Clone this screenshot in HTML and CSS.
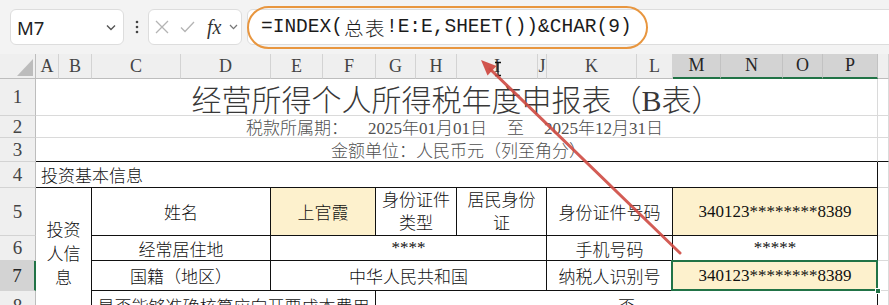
FILE: index.html
```html
<!DOCTYPE html>
<html lang="zh-CN">
<head>
<meta charset="utf-8">
<title>经营所得个人所得税年度申报表</title>
<link rel="stylesheet" href="styles.css">
</head>
<body>
<div class="toolbar">
  <div class="namebox">
    <span class="ref">M7</span>
    <svg class="chev" width="10" height="7" viewBox="0 0 10 7"><polyline points="1,1.5 5,5.5 9,1.5" fill="none" stroke="#555" stroke-width="1.4"/></svg>
  </div>
  <div class="grip">
    <svg width="4" height="14" viewBox="0 0 4 14"><circle cx="2" cy="2" r="1.3" fill="#444"/><circle cx="2" cy="7" r="1.3" fill="#444"/><circle cx="2" cy="12" r="1.3" fill="#444"/></svg>
  </div>
  <div class="fxbox">
    <svg class="ico" width="14" height="14" viewBox="0 0 14 14"><path d="M1 1 L13 13 M13 1 L1 13" stroke="#b4b4b4" stroke-width="1.3" fill="none"/></svg>
    <svg class="ico" width="15" height="12" viewBox="0 0 15 12"><polyline points="1,6.5 5,10.5 14,1" stroke="#b4b4b4" stroke-width="1.3" fill="none"/></svg>
    <span class="fx">fx</span>
    <svg class="chev" width="9" height="6" viewBox="0 0 9 6"><polyline points="1,1 4.5,4.6 8,1" fill="none" stroke="#777" stroke-width="1.3"/></svg>
  </div>
  <div class="formula"><span>=INDEX(</span><span class="cjk">总表</span><span>!E:E,SHEET())&amp;CHAR(9)</span></div>
  <div class="pill"></div>
</div>

<div class="sheet">
  <div class="corner"><span class="tri"></span></div>
  <div class="hd">A</div>
  <div class="hd">B</div>
  <div class="hd">C</div>
  <div class="hd">D</div>
  <div class="hd">E</div>
  <div class="hd">F</div>
  <div class="hd">G</div>
  <div class="hd">H</div>
  <div class="hd">I</div>
  <div class="hd">J</div>
  <div class="hd">K</div>
  <div class="hd">L</div>
  <div class="hd sel">M</div>
  <div class="hd sel">N</div>
  <div class="hd sel">O</div>
  <div class="hd sel">P</div>
  <div class="hd"></div>

  <div class="rh c1">1</div>
  <div class="g cAP title">经营所得个人所得税年度申报表（B表）</div>
  <div class="g cQ"></div>

  <div class="rh c1">2</div>
  <div class="g cAP sub period"><span>税款所属期：</span><span>2025年01月01日</span><span>至</span><span>2025年12月31日</span></div>
  <div class="g cQ"></div>

  <div class="rh c1">3</div>
  <div class="g cAP sub bb">金额单位：人民币元（列至角分）</div>
  <div class="g cQ bb"></div>

  <div class="rh c1">4</div>
  <div class="t cAP left">投资基本信息</div>
  <div class="g cQ"></div>

  <div class="rh c1">5</div>
  <div class="t cAB vert">投资人信息</div>
  <div class="t cCD">姓名</div>
  <div class="t cEF fill">上官霞</div>
  <div class="t cGH wrap">身份证件类型</div>
  <div class="t cIJ wrap">居民身份证</div>
  <div class="t cKL">身份证件号码</div>
  <div class="t cMP fill">340123********8389</div>
  <div class="g cQ"></div>

  <div class="rh c1">6</div>
  <div class="t cCD">经常居住地</div>
  <div class="t cEJ">****</div>
  <div class="t cKL">手机号码</div>
  <div class="t cMP">*****</div>
  <div class="g cQ"></div>

  <div class="rh c1 sel">7</div>
  <div class="t cCD">国籍（地区）</div>
  <div class="t cEJ">中华人民共和国</div>
  <div class="t cKL">纳税人识别号</div>
  <div class="t cMP fill active">340123********8389<span class="selbox"></span><span class="handle"></span></div>
  <div class="g cQ"></div>

  <div class="rh c1">8</div>
  <div class="t cCF">是否能够准确核算应向开票成本费用</div>
  <div class="t cGP">否</div>
  <div class="g cQ"></div>
</div>

<svg class="overlay" width="889" height="305" viewBox="0 0 889 305">
  <g stroke="#111" stroke-width="1.3" fill="none">
    <path d="M495 62.5 H501 M498 62.5 V75.5 M495 75.5 H501"/>
  </g>
  <line x1="680" y1="253" x2="490" y2="69" stroke="#cf4b43" stroke-width="3" stroke-linecap="round" opacity="0.9"/>
  <polygon points="481,60 496.5,66 487.5,75.5" fill="#cf4b43" opacity="0.95"/>
</svg>
</body>
</html>
```

FILE: styles.css
```css
* { box-sizing: border-box; }
html, body { margin: 0; padding: 0; }
body {
  width: 889px;
  height: 305px;
  overflow: hidden;
  position: relative;
  background: #fff;
  font-family: "Noto Sans", "Noto Sans CJK SC", sans-serif;
}

/* ---------- toolbar ---------- */
.toolbar {
  position: relative;
  height: 54px;
  background: #f3f3f3;
  display: flex;
  align-items: center;
  padding-left: 10px;
}
.namebox {
  width: 114px;
  height: 36px;
  background: #fff;
  border: 1px solid #dddddd;
  border-radius: 6px;
  display: flex;
  align-items: center;
  justify-content: space-between;
  padding: 0 7px 0 6px;
}
.ref {
  font-family: "Noto Sans", sans-serif;
  font-size: 18.5px;
  color: #222;
}
.grip {
  width: 24px;
  display: flex;
  justify-content: center;
  padding-left: 1px;
}
.fxbox {
  width: 94px;
  height: 36px;
  background: #fff;
  border: 1px solid #dddddd;
  border-radius: 6px;
  display: flex;
  align-items: center;
  padding-left: 6px;
  gap: 11px;
}
.fx {
  font-family: "Liberation Serif", serif;
  font-style: italic;
  font-size: 20px;
  color: #333;
  margin-left: 1px;
  margin-right: -3px;
}
.formula {
  flex: 1;
  height: 36px;
  margin-left: 5px;
  margin-right: -8px;
  background: #fff;
  border: 1px solid #dddddd;
  border-radius: 6px;
  display: flex;
  align-items: center;
  padding-left: 13px;
  font-family: "Liberation Mono", monospace;
  font-size: 19.5px;
  color: #1b1b1b;
  white-space: pre;
}
.cjk {
  font-family: "Noto Sans CJK SC", sans-serif;
  font-size: 19.5px;
  letter-spacing: 1.5px;
  margin-left: 1px;
  font-weight: 300;
}
.pill {
  position: absolute;
  left: 247px;
  top: 6px;
  width: 401px;
  height: 43px;
  border: 2px solid #e8963f;
  border-radius: 22px;
}

/* ---------- sheet ---------- */
.sheet {
  display: grid;
  grid-template-columns: 36px 23px 33px 89px 90px 52px 53px 40px 41px 81px 9px 90px 36px 48px 62px 40px 55px 1fr;
  grid-template-rows: 25px 37px 22px 24px 26px 48px 25px 30px 30px;
  font-family: "Liberation Serif", "Noto Sans CJK SC", serif;
  font-size: 17px;
}
.sheet > div {
  display: flex;
  align-items: center;
  justify-content: center;
  white-space: nowrap;
  overflow: hidden;
}
.corner {
  background: #efefef;
  border-right: 1px solid #bdbdbd;
  border-bottom: 1px solid #bdbdbd;
  align-items: flex-end !important;
  justify-content: flex-end !important;
  padding: 0 2px 2px 0;
}
.tri {
  width: 0;
  height: 0;
  border-left: 16px solid transparent;
  border-bottom: 17px solid #bcbcbc;
}
.hd {
  background: #efefef;
  border-right: 1px solid #d3d3d3;
  border-bottom: 1px solid #bdbdbd;
  color: #444;
  font-family: "Liberation Serif", serif;
  font-size: 18px;
}
.hd.sel {
  background: #d3d3d3;
  color: #262626;
  border-right-color: #c2c2c2;
  border-bottom: 2px solid #217346;
}
.rh {
  background: #efefef;
  border-right: 1px solid #bdbdbd;
  border-bottom: 1px solid #d3d3d3;
  color: #444;
  font-family: "Liberation Serif", serif;
  font-size: 19px;
}
.rh.sel {
  background: #d3d3d3;
  color: #262626;
  border-right: 2px solid #217346;
}
.g {
  border-right: 1px solid #dadada;
  border-bottom: 1px solid #dadada;
}
.t {
  border-right: 1px solid #111;
  border-bottom: 1px solid #111;
  color: #111;
  font-weight: 300;
}
.bb { border-bottom: 1px solid #111 !important; }

.c1 { grid-column: 1; }
.cAP { grid-column: 2 / 18; }
.cQ { grid-column: 18 / 19; }
.cAB { grid-column: 2 / 4; grid-row: span 4; }
.cCD { grid-column: 4 / 6; }
.cEF { grid-column: 6 / 8; }
.cGH { grid-column: 8 / 10; }
.cIJ { grid-column: 10 / 12; }
.cKL { grid-column: 12 / 14; }
.cMP { grid-column: 14 / 18; }
.cEJ { grid-column: 6 / 12; }
.cCF { grid-column: 4 / 8; }
.cGP { grid-column: 8 / 18; }

.title {
  font-size: 30px;
  color: #383838;
  font-weight: 300;
  padding-top: 2px;
}
.sub {
  color: #505050;
  font-weight: 300;
  padding-left: 4px;
}
.period { gap: 20px; padding-left: 6px; padding-right: 10px; }
.left {
  justify-content: flex-start !important;
  padding-left: 5px;
}
.fill { background: #fdf1cd; }
.wrap, .vert {
  white-space: normal !important;
  text-align: center;
  line-height: 23px;
}
.wrap { padding: 0 6px; }
.vert {
  padding: 2px 10px 0;
  line-height: 24px;
}
.active {
  position: relative;
  overflow: visible !important;
}
.selbox {
  position: absolute;
  left: -2px;
  top: -1px;
  right: -1px;
  bottom: -1px;
  border: 2px solid #217346;
  pointer-events: none;
}
.handle {
  position: absolute;
  right: -4px;
  bottom: -4px;
  width: 6px;
  height: 6px;
  background: #217346;
  border: 1px solid #fff;
}

.overlay {
  position: absolute;
  left: 0;
  top: 0;
  pointer-events: none;
}
```
